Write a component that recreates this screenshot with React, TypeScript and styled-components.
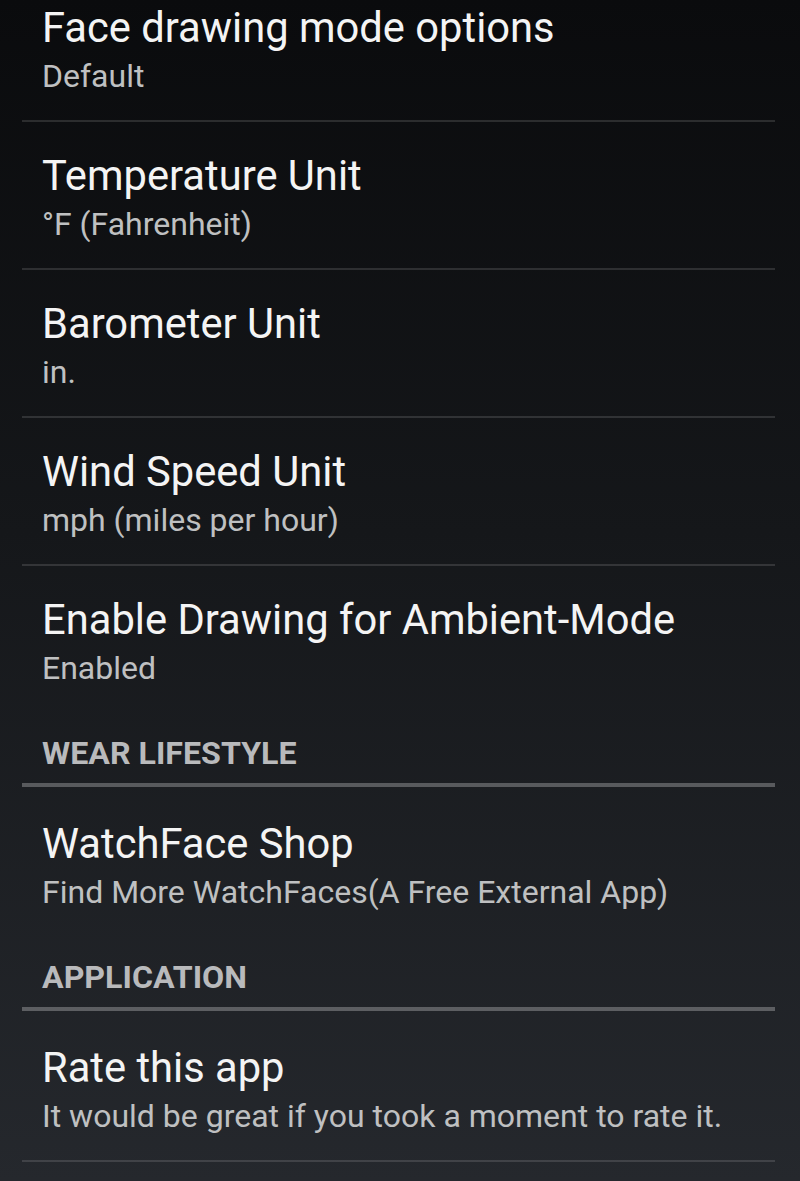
import styled, { createGlobalStyle } from 'styled-components';

const GlobalStyle = createGlobalStyle`
  html, body {
    margin: 0;
    padding: 0;
    background: #0b0c0e;
  }
  body {
    font-family: Roboto, "Noto Sans", sans-serif;
    -webkit-font-smoothing: antialiased;
  }
`;

const Screen = styled.div`
  width: 800px;
  height: 1181px;
  overflow: hidden;
  background: linear-gradient(to bottom, #0a0b0d 0%, #15171a 45%, #25282d 100%);
`;

// the list is scrolled a little, so the first row is cut at the top
const List = styled.div`
  margin-top: -26px;
  padding: 0 25px 0 22px;
`;

const Row = styled.div<{ $divider: boolean }>`
  padding: 30px 20px 20px;
  border-bottom: ${(p) => (p.$divider ? '2px solid rgba(255, 255, 255, 0.13)' : 'none')};
`;

const Title = styled.div`
  font-size: 41.7px;
  line-height: 48px;
  color: #f4f4f4;
  white-space: nowrap;
`;

const Summary = styled.div`
  font-size: 32px;
  line-height: 48px;
  color: #bfc0c1;
  white-space: nowrap;
`;

const Category = styled.div`
  padding: 21px 20px 10px;
  margin-bottom: 3px;
  border-bottom: 4px solid rgba(255, 255, 255, 0.27);
  font-size: 32.2px;
  line-height: 40px;
  font-weight: 700;
  color: #b9babc;
  text-transform: uppercase;
`;

type Pref = { title: string; summary: string; divider: boolean };

const Preference = ({ title, summary, divider }: Pref) => (
  <Row $divider={divider}>
    <Title>{title}</Title>
    <Summary>{summary}</Summary>
  </Row>
);

const App = () => (
  <Screen>
    <GlobalStyle />
    <List>
      <Preference title="Face drawing mode options" summary="Default" divider />
      <Preference title="Temperature Unit" summary="°F (Fahrenheit)" divider />
      <Preference title="Barometer Unit" summary="in." divider />
      <Preference title="Wind Speed Unit" summary="mph (miles per hour)" divider />
      <Preference title="Enable Drawing for Ambient-Mode" summary="Enabled" divider={false} />
      <Category>Wear Lifestyle</Category>
      <Preference
        title="WatchFace Shop"
        summary="Find More WatchFaces(A Free External App)"
        divider={false}
      />
      <Category>Application</Category>
      <Preference
        title="Rate this app"
        summary="It would be great if you took a moment to rate it."
        divider
      />
    </List>
  </Screen>
);

export default App;
